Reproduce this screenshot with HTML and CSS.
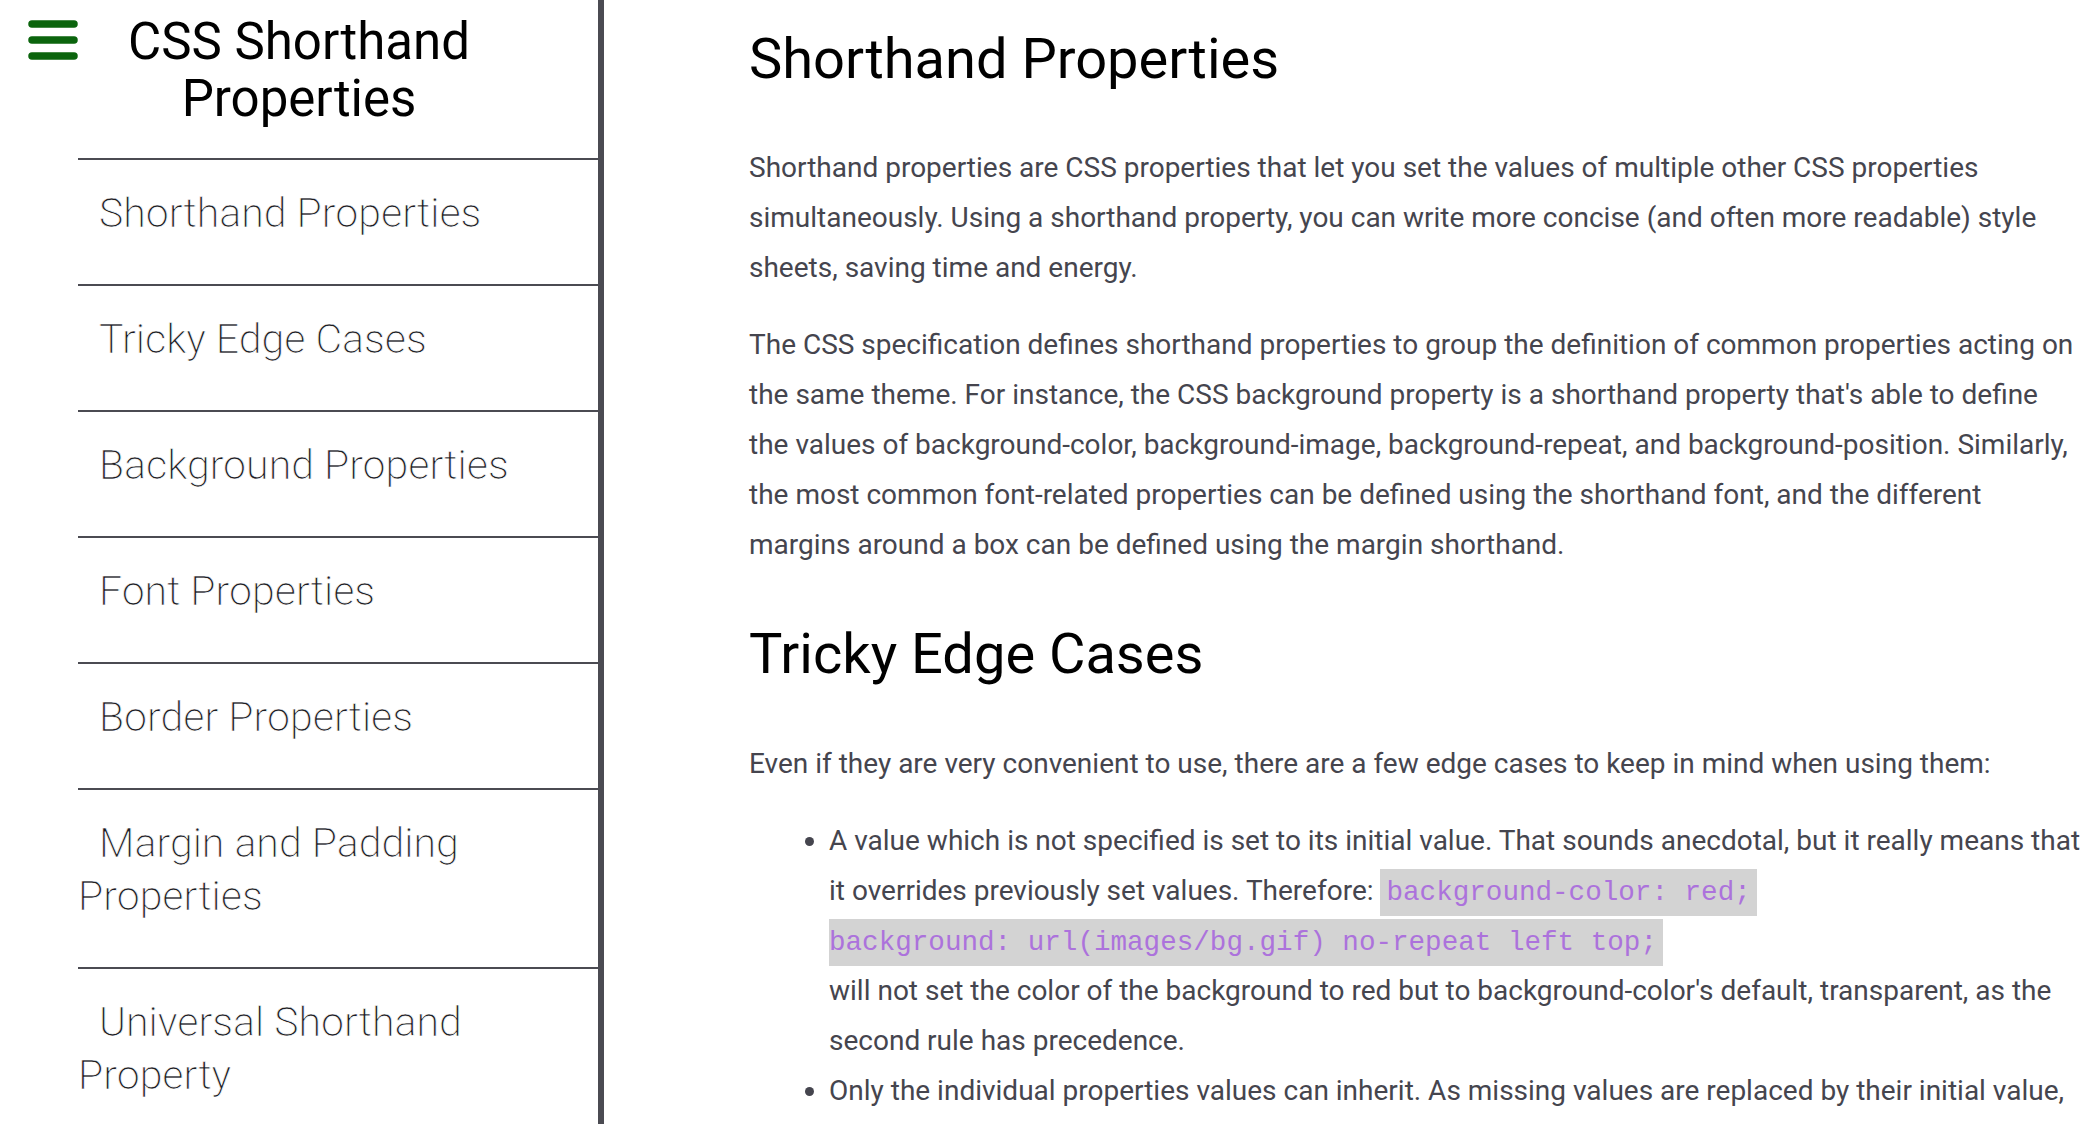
FILE: index.html
```html
<!DOCTYPE html>
<html lang="en">
<head>
<meta charset="utf-8">
<title>CSS Shorthand Properties</title>
<link rel="stylesheet" href="styles.css">
</head>
<body>
<div class="page">
  <aside class="sidebar">
    <button class="menu-btn" aria-label="Menu">
      <svg width="50" height="40" viewBox="0 0 50 40">
        <line x1="4" y1="4" x2="46" y2="4" />
        <line x1="4" y1="20" x2="46" y2="20" />
        <line x1="4" y1="36" x2="46" y2="36" />
      </svg>
    </button>
    <h1 class="site-title">CSS Shorthand Properties</h1>
    <ul class="nav">
      <li class="nav-item">Shorthand Properties</li>
      <li class="nav-item">Tricky Edge Cases</li>
      <li class="nav-item">Background Properties</li>
      <li class="nav-item">Font Properties</li>
      <li class="nav-item">Border Properties</li>
      <li class="nav-item">Margin and Padding Properties</li>
      <li class="nav-item">Universal Shorthand Property</li>
    </ul>
  </aside>
  <main class="main">
    <section class="section">
      <h2 class="section-title">Shorthand Properties</h2>
      <p class="text">Shorthand properties are CSS properties that let you set the values of multiple other CSS properties simultaneously. Using a shorthand property, you can write more concise (and often more readable) style sheets, saving time and energy.</p>
      <p class="text">The CSS specification defines shorthand properties to group the definition of common properties acting on the same theme. For instance, the CSS background property is a shorthand property that's able to define the values of background-color, background-image, background-repeat, and background-position. Similarly, the most common font-related properties can be defined using the shorthand font, and the different margins around a box can be defined using the margin shorthand.</p>
    </section>
    <section class="section">
      <h2 class="section-title">Tricky Edge Cases</h2>
      <p class="text">Even if they are very convenient to use, there are a few edge cases to keep in mind when using them:</p>
      <ul class="list">
        <li class="list-item">A value which is not specified is set to its initial value. That sounds anecdotal, but it really means that it overrides previously set values. Therefore: <code class="code code-first">background-color: red;</code><br><code class="code code-cont">background: url(images/bg.gif) no-repeat left top;</code><br>will not set the color of the background to red but to background-color's default, transparent, as the second rule has precedence.</li>
        <li class="list-item">Only the individual properties values can inherit. As missing values are replaced by their initial value, it is impossible to allow inheritance of individual properties by omitting them. The keyword inherit can be applied to a property, but only as a whole, not as a keyword for one value or another.</li>
      </ul>
    </section>
  </main>
</div>
</body>
</html>
```
FILE: styles.css
```css
html, body {
  margin: 0;
  padding: 0;
  background: #ffffff;
}

body {
  font-family: Roboto, "Liberation Sans", sans-serif;
}

.page {
  display: flex;
  height: 100vh;
  overflow: hidden;
}

.sidebar {
  position: relative;
  flex: 0 0 598px;
  border-right: 6px solid #4b4b52;
  height: 100%;
}

.menu-btn {
  position: absolute;
  left: 28px;
  top: 20px;
  width: 50px;
  height: 40px;
  padding: 0;
  border: 0;
  background: transparent;
}

.menu-btn svg {
  display: block;
}

.menu-btn line {
  stroke: #0b640d;
  stroke-width: 7.5;
  stroke-linecap: round;
}

.site-title {
  margin: 13px 0 0;
  padding: 0 80px;
  text-align: center;
  font-size: 51px;
  line-height: 57px;
  font-weight: 400;
  color: #000;
}

.nav {
  list-style: none;
  margin: 31px 0 0 78px;
  padding: 0;
}

.nav-item {
  border-top: 2px solid #4b4b52;
  padding: 27px 10px 44px 0;
  font-family: "Roboto Light", Roboto, sans-serif;
  font-size: 41px;
  line-height: 53px;
  font-weight: 300;
  color: #1c1c22;
  -webkit-text-stroke: 0.7px #ffffff;
  paint-order: fill stroke;
  text-indent: 21px;
}

.main {
  flex: 1 1 auto;
  min-width: 0;
  padding: 0 13px 0 145px;
  color: #45454e;
}

.section-title {
  font-size: 56px;
  font-weight: 400;
  line-height: 64px;
  color: #000;
  margin: 52px 0 53px;
}

.section:first-child .section-title {
  margin-top: 27px;
  margin-bottom: 52px;
}

.text {
  font-size: 28px;
  line-height: 50px;
  margin: 27px 0;
}

.list {
  margin: 27px 0;
  padding-left: 80px;
  font-size: 28px;
  line-height: 50px;
}

.list-item {
  margin: 0;
}

.code {
  font-family: "Liberation Mono", "Courier New", monospace;
  font-size: 27.6px;
  line-height: 1;
  color: #ac72dc;
  background: #d3d3d3;
  padding: 8px 6px;
}

.code-cont {
  padding-left: 0;
}
```
